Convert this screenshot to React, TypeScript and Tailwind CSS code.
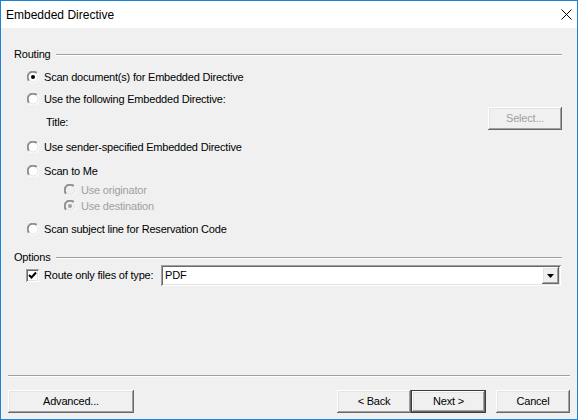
import React from 'react';

const raised =
  'shadow-[inset_-1px_-1px_#696969,inset_1px_1px_#ffffff,inset_-2px_-2px_#a0a0a0,inset_2px_2px_#e3e3e3]';
const sunken =
  'shadow-[inset_1px_1px_#a0a0a0,inset_-1px_-1px_#ffffff,inset_2px_2px_#696969,inset_-2px_-2px_#e3e3e3]';

// classic 3D radio button
const Radio: React.FC<{ checked?: boolean; disabled?: boolean }> = ({ checked, disabled }) => (
  <svg width="12" height="12" viewBox="0 0 12 12" className="shrink-0">
    <circle cx="6" cy="6" r="5" fill={disabled ? '#f0f0f0' : '#ffffff'} />
    <path d="M1.76 10.24 A6 6 0 0 1 10.24 1.76" stroke="#a0a0a0" fill="none" strokeWidth="1.2" />
    <path d="M10.24 1.76 A6 6 0 0 1 1.76 10.24" stroke="#ffffff" fill="none" strokeWidth="1.2" />
    <path d="M2.46 9.54 A5 5 0 0 1 9.54 2.46" stroke="#696969" fill="none" />
    <path d="M9.54 2.46 A5 5 0 0 1 2.46 9.54" stroke="#e3e3e3" fill="none" />
    {checked && <circle cx="6" cy="6" r="2" fill={disabled ? '#a0a0a0' : '#000000'} />}
  </svg>
);

const RadioRow: React.FC<{
  label: string;
  checked?: boolean;
  disabled?: boolean;
  className?: string;
}> = ({ label, checked, disabled, className }) => (
  <div className={`flex h-[14px] items-center gap-[5px] ${className ?? ''}`}>
    <Radio checked={checked} disabled={disabled} />
    <span className={disabled ? 'text-[#a0a0a0]' : ''}>{label}</span>
  </div>
);

const GroupHeader: React.FC<{ label: string; className?: string }> = ({ label, className }) => (
  <div className={`mr-[8px] flex h-[14px] items-center gap-[5px] pl-[6px] ${className ?? ''}`}>
    <span>{label}</span>
    <div className="mt-[1px] h-[2px] flex-1 border-t border-b border-t-[#a0a0a0] border-b-white" />
  </div>
);

const Btn: React.FC<{ label: string; w: string; isDefault?: boolean; disabled?: boolean }> = ({
  label,
  w,
  isDefault,
  disabled,
}) => (
  <div
    className={`flex h-[23px] items-center justify-center bg-[#f0f0f0] ${w} ${
      isDefault ? 'border border-[#3c3c3c]' : ''
    } ${raised} ${disabled ? 'text-[#a0a0a0]' : ''}`}
  >
    {label}
  </div>
);

export default function App() {
  return (
    <div className="flex h-[420px] w-[578px] flex-col border border-[#1883d7] bg-[#f0f0f0] font-['Liberation_Sans',Arial,sans-serif] text-[11px] tracking-[-0.2px] text-black">
      <div className="flex h-[27px] shrink-0 items-center justify-between bg-white pl-[5px] pr-[5px]">
        <span className="text-[12px] tracking-normal">Embedded Directive</span>
        <svg width="11" height="11" viewBox="0 0 11 11">
          <path d="M0.5 0.5 L10.5 10.5 M10.5 0.5 L0.5 10.5" stroke="#000" strokeWidth="1" />
        </svg>
      </div>

      <div className="flex flex-1 flex-col pl-[7px] pr-[7px]">
        <GroupHeader label="Routing" className="mt-[19px]" />
        <div className="ml-[19px] flex flex-col">
          <RadioRow label="Scan document(s) for Embedded Directive" checked className="mt-[9px]" />
          <RadioRow label="Use the following Embedded Directive:" className="mt-[8px]" />
        </div>
        <div className="mr-[8px] mt-[1px] flex h-[22px] items-start justify-between">
          <span className="ml-[38px] pt-[7px]">Title:</span>
          <Btn label="Select..." w="w-[74px]" disabled />
        </div>
        <div className="ml-[19px] flex flex-col">
          <RadioRow label="Use sender-specified Embedded Directive" className="mt-[11px]" />
          <RadioRow label="Scan to Me" className="mt-[10px]" />
          <div className="ml-[37px] flex flex-col">
            <RadioRow label="Use originator" disabled className="mt-[5px]" />
            <RadioRow label="Use destination" checked disabled className="mt-[2px]" />
          </div>
          <RadioRow label="Scan subject line for Reservation Code" className="mt-[9px]" />
        </div>

        <GroupHeader label="Options" className="mt-[14px]" />
        <div className="mr-[9px] mt-[1px] flex h-[21px] items-center">
          <div className={`ml-[18px] flex h-[13px] w-[13px] shrink-0 items-center justify-center bg-white ${sunken}`}>
            <svg width="9" height="9" viewBox="0 0 9 9">
              <path d="M1 4 L3.5 6.5 L8 1.5" stroke="#000" strokeWidth="2" fill="none" />
            </svg>
          </div>
          <span className="ml-[5px] w-[117px] shrink-0">Route only files of type:</span>
          <div className={`flex h-[21px] flex-1 items-center bg-white p-[2px] ${sunken}`}>
            <span className="flex-1 pl-[2px]">PDF</span>
            <div className={`flex h-[17px] w-[17px] items-center justify-center bg-[#f0f0f0] ${raised}`}>
              <svg width="7" height="4" viewBox="0 0 7 4">
                <path d="M0 0 H7 L3.5 4 Z" fill="#000" />
              </svg>
            </div>
          </div>
        </div>

        <div className="flex-1" />
        <div className="h-[2px] border-t border-b border-t-[#a0a0a0] border-b-white" />
        <div className="mb-[6px] mt-[13px] flex items-center">
          <Btn label="Advanced..." w="w-[126px]" />
          <div className="flex-1" />
          <Btn label="< Back" w="w-[74px]" />
          <Btn label="Next >" w="w-[75px]" isDefault />
          <div className="w-[10px]" />
          <Btn label="Cancel" w="w-[74px]" />
        </div>
      </div>
    </div>
  );
}
